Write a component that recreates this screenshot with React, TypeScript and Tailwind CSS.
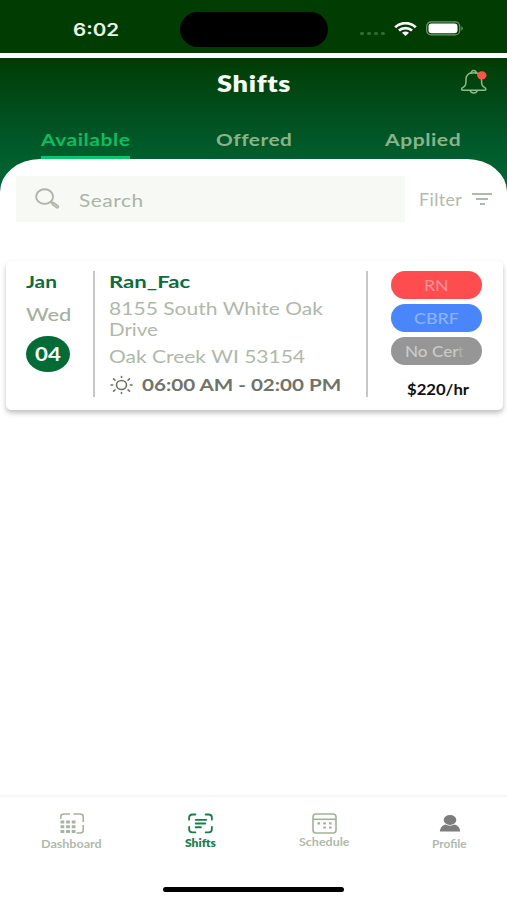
import { useLayoutEffect, useRef } from "react";

/** One line of text stretched horizontally to a given width. */
function Label({ text, width, className = "" }: { text: string; width: number; className?: string }) {
  const ref = useRef<HTMLSpanElement>(null);
  useLayoutEffect(() => {
    const el = ref.current;
    if (el) el.style.transform = `scaleX(${width / el.offsetWidth})`;
  }, [text, width]);
  return (
    <div className={`flex shrink-0 items-center ${className}`} style={{ width }}>
      <span ref={ref} className="inline-block shrink-0 origin-left whitespace-nowrap">
        {text}
      </span>
    </div>
  );
}

function StatusBar() {
  return (
    <div className="flex h-[53px] shrink-0 items-start bg-[#013d02]">
      <div className="flex w-[180px] pt-[21px] pl-[73px]">
        <Label text="6:02" width={46} className="h-5 font-['Inter',sans-serif] text-[17px] font-semibold text-[#e9f6e6]" />
      </div>
      <div className="mt-3 h-[35px] w-[148px] rounded-full bg-black" />
      <div className="ml-8 flex h-[57px] items-center">
        <div className="mt-2.5 mr-[9px] flex gap-[3px]">
          {[0, 1, 2, 3].map((i) => (
            <span key={i} className="h-[3px] w-1 rounded-full bg-[#2e7030]" />
          ))}
        </div>
        <svg width="23" height="14" viewBox="0 0 23 14" fill="none" stroke="#fff" strokeWidth="2.7">
          <path d="M1.2 5.2C7-.2 16-.2 21.8 5.2" />
          <path d="M5 8.5C8.6 5.2 14.4 5.2 18 8.5" />
          <path d="M8 10.8q3.5-2.8 7 0L11.5 14Z" fill="#fff" stroke="none" />
        </svg>
        <svg className="ml-[9px]" width="38" height="15" viewBox="0 0 38 15">
          <rect x=".7" y=".9" width="33" height="13" rx="4.5" fill="none" stroke="#6e9b6b" strokeWidth="1.2" />
          <rect x="2.5" y="2.6" width="29" height="9.7" rx="3" fill="#fff" />
          <path d="M35.3 5.3q3 2.2 0 4.4Z" fill="#6e9b6b" />
        </svg>
      </div>
    </div>
  );
}

function Bell() {
  return (
    <svg width="28" height="26" viewBox="0 0 28 26" fill="none" stroke="#8dbb86" strokeWidth="1.5" strokeLinejoin="round">
      <path d="M11.3 3.8C7.5 4.8 6 7.500 6 10.500c0 5-.4 6.500-3 7.800-2.200 1.200-1.600 3 .3 3h20.900c1.900 0 2.500-1.800.3-3-2.600-1.300-3-2.800-3-7.800 0-3-1.500-5.700-5.300-6.700" />
      <path d="M11.300 4.200C10.600 .6 16.900 .6 16.200 4.200q-2.400-.7-4.900 0ZM10.300 21.300c.3 3.600 6.600 3.600 6.900 0" />
      <ellipse cx="21.800" cy="6.300" rx="4.700" ry="4" fill="#fb5348" stroke="none" />
    </svg>
  );
}

function Header() {
  return (
    <header className="mt-[5px] h-[137px] shrink-0 bg-linear-to-b from-[#013c03] via-[#015323] via-50% to-[#006b39]">
      <div className="flex h-[51px] items-center justify-between pr-[19px] pl-[217px]">
        <Label text="Shifts" width={74} className="-mt-px h-6 text-[22px] font-extrabold tracking-wide text-[#f6fff4]" />
        <div className="-mt-1">
          <Bell />
        </div>
      </div>
      <nav className="grid h-[50px] grid-cols-3 text-[17.500px] font-bold tracking-wide">
        <div className="flex flex-col items-center pt-[19px] pl-0.5">
          <Label text="Available" width={90} className="h-6 text-[#0cbd62]" />
          <div className="mt-1 h-[5px] w-[89px] bg-[#08c766]" />
        </div>
        <div className="flex justify-center pt-[19px]">
          <Label text="Offered" width={76} className="h-6 text-[#8bb38a]" />
        </div>
        <div className="flex justify-center pt-[19px]">
          <Label text="Applied" width={76} className="h-6 text-[#8bb38a]" />
        </div>
      </nav>
    </header>
  );
}

function SearchRow() {
  return (
    <div className="flex h-[46px] items-center pl-4">
      <div className="flex h-full w-[389px] items-center bg-[#f7f9f5] pl-[19px]">
        <svg className="-mt-px" width="26" height="22" viewBox="0 0 26 22" fill="none" stroke="#acb6a8">
          <ellipse cx="9.600" cy="8.600" rx="8.500" ry="7.300" strokeWidth="1.900" />
          <path d="m15.500 14 2.500 1.700" strokeWidth="1.600" />
          <path d="m18 15.500 4.300 3.200" strokeWidth="3.800" strokeLinecap="round" />
          <path d="m18.500 15.900 3.700 2.700" stroke="#d3dacf" strokeWidth=".9" strokeLinecap="round" />
        </svg>
        <Label text="Search" width={65} className="ml-[18px] mt-[3px] h-6 text-[18px] tracking-wide text-[#a9b5a5]" />
      </div>
      <Label text="Filter" width={43} className="ml-3.5 mt-0.5 h-6 text-[16.500px] tracking-wide text-[#b3bab0]" />
      <div className="ml-2.5 flex w-5 flex-col items-center gap-[3px]">
        <span className="h-[2px] w-5 bg-[#b0b9ad]" />
        <span className="h-[2px] w-3 bg-[#b0b9ad]" />
        <span className="h-[2px] w-[5px] bg-[#b0b9ad]" />
      </div>
    </div>
  );
}

function Sun() {
  return (
    <svg width="24" height="20" viewBox="0 0 24 20" fill="none" stroke="#6b7069" strokeWidth="1.600" strokeLinecap="round">
      <ellipse cx="12.500" cy="10" rx="5" ry="4.500" />
      <path d="M12.500 1.500v.9M12.500 17.600v.9M2 10h1.700M21.300 10H23M4.500 3.900l1.500 1.200M20.500 3.900l-1.500 1.200M4.500 16.100l1.500-1.200M20.500 16.100l-1.500-1.200" />
    </svg>
  );
}

function ShiftCard() {
  return (
    <article className="mr-1 ml-1.5 mt-[39px] flex h-[149px] rounded-[5px] bg-white pt-[10px] shadow-[0_3px_5px_rgba(0,0,0,0.25)]">
      <div className="flex h-[126px] w-[89px] flex-col border-r-2 border-[#c4c9c3] pl-5">
        <Label text="Jan" width={31} className="h-[22px] text-[17.500px] font-bold text-[#086e3b]" />
        <Label text="Wed" width={45} className="mt-2.5 h-[22px] text-[18px] font-medium text-[#a5b0a0]" />
        <div className="mt-[11px] flex h-9 w-11 items-center justify-center rounded-[50%] bg-[#026c36]">
          <Label text="04" width={26} className="h-5 text-[18px] font-bold text-white" />
        </div>
      </div>
      <div className="flex h-[126px] w-[273px] flex-col border-r-2 border-[#c4c9c3] pl-[14px] text-[18px] text-[#b0b8ac]">
        <Label text="Ran_Fac" width={81} className="h-[22px] text-[17.500px] font-bold text-[#086e3b]" />
        <Label text="8155 South White Oak" width={214} className="mt-[5px] h-[21px]" />
        <Label text="Drive" width={49} className="h-[21px]" />
        <Label text="Oak Creek WI 53154" width={196} className="mt-[5px] h-[22px]" />
        <div className="mt-[7px] flex h-[22px] items-center">
          <Sun />
          <Label text="06:00 AM - 02:00 PM" width={199} className="ml-[9px] h-5 text-[17.500px] font-bold text-[#6f746b]" />
        </div>
      </div>
      <div className="flex flex-1 flex-col pl-[23px]">
        <div className="flex w-[91px] flex-col gap-[5.500px] text-[15.500px]">
          <div className="flex h-[27.500px] items-center justify-center rounded-full bg-[#ff4d4f]">
            <Label text="RN" width={25} className="mt-0.5 h-5 font-medium text-[#ff9391]" />
          </div>
          <div className="flex h-[27.500px] items-center justify-center rounded-full bg-[#4a86fb]">
            <Label text="CBRF" width={45} className="mt-0.5 h-5 font-medium text-[#8db2fb]" />
          </div>
          <div className="flex h-[27.500px] items-center justify-center rounded-full bg-[#969696]">
            <div className="mt-0.5 mr-1 flex">
              <Label text="No Cer" width={53} className="h-5 font-medium text-[#c9cbc8]" />
              <Label text="t" width={6} className="h-5 text-[#afb0af]" />
            </div>
          </div>
        </div>
        <Label text="$220/hr" width={62} className="mt-[15px] ml-4 h-5 text-[14.500px] font-bold text-[#111]" />
      </div>
    </article>
  );
}

function DashboardIcon() {
  return (
    <svg width="24" height="21" viewBox="0 0 24 21" fill="none" stroke="#a6b3a0" strokeWidth="1.600">
      <path d="M.8 6V3.500Q.8 1 4 1h6M13.500 1H20q3.200 0 3.200 2.500V9M23.200 12v5.500q0 2.500-3.200 2.500h-3.500" />
      {[9, 13.700, 18.400].map((y) => (
        <path key={y} d={`M.5 ${y}h15`} strokeWidth="3" strokeDasharray="3.800 1.800" />
      ))}
    </svg>
  );
}

function ShiftsIcon() {
  return (
    <svg width="25" height="21" viewBox="0 0 26 21" fill="none" stroke="#16804a" strokeWidth="1.900" strokeLinecap="round">
      <path d="M1.200 6.500V4q0-2.900 3.500-2.900h3M18.300 1.100h3q3.500 0 3.500 2.900v2.500M1.200 14v2.800q0 2.900 3.500 2.900h3M18.300 19.700h3q3.500 0 3.500-2.900V14M8 6.700h11M8 10.500h10M8 14.400h5.500" />
    </svg>
  );
}

function ScheduleIcon() {
  return (
    <svg width="25" height="21" viewBox="0 0 25 21" fill="none" stroke="#a1b29b" strokeWidth="1.600">
      <rect x="1" y="1" width="23" height="19" rx="3" />
      <path d="M1 6.300h23" />
      <path d="M5.500 10.300h2.600M11.300 10.300h2.600M17 10.300h2.600M11.300 14.500h2.600M17 14.500h2.600" strokeWidth="2.200" />
    </svg>
  );
}

function ProfileIcon() {
  return (
    <svg width="22" height="17" viewBox="0 0 22 17" fill="#7c7d7c">
      <ellipse cx="11" cy="5" rx="6.300" ry="5" />
      <path d="M.8 16.500q.5-5.500 5.500-7 4.700 2.300 9.400 0 5 1.500 5.500 7Z" />
    </svg>
  );
}

function TabBar() {
  return (
    <footer className="flex h-[105px] shrink-0 flex-col items-center border-t-2 border-[#f8f8f8] text-[10.500px] font-bold text-[#b0baab]">
      <div className="flex h-[90px] w-full pl-px">
        <div className="flex w-[141px] shrink-0 flex-col items-center pt-4">
          <DashboardIcon />
          <Label text="Dashboard" width={61} className="mt-1 h-3.5" />
        </div>
        <div className="flex w-[117px] shrink-0 flex-col items-center pt-4">
          <ShiftsIcon />
          <Label text="Shifts" width={31} className="mt-[3px] h-3.5 font-extrabold text-[#1c804d]" />
        </div>
        <div className="flex w-[130px] shrink-0 flex-col items-center pt-4">
          <ScheduleIcon />
          <Label text="Schedule" width={50} className="mt-0.5 h-3.5" />
        </div>
        <div className="flex flex-1 flex-col items-center pt-[18px] pl-[3px]">
          <ProfileIcon />
          <Label text="Profile" width={35} className="mt-1.5 h-3.5" />
        </div>
      </div>
      <div className="h-[5px] w-[181px] rounded-full bg-black" />
    </footer>
  );
}

export default function App() {
  return (
    <div className="flex h-[900px] w-[507px] flex-col overflow-hidden bg-white font-['Lato',sans-serif]">
      <StatusBar />
      <Header />
      <main className="relative -mt-[36px] flex-1 rounded-t-[40px_33px] bg-white pt-[17px]">
        <SearchRow />
        <ShiftCard />
      </main>
      <TabBar />
    </div>
  );
}
